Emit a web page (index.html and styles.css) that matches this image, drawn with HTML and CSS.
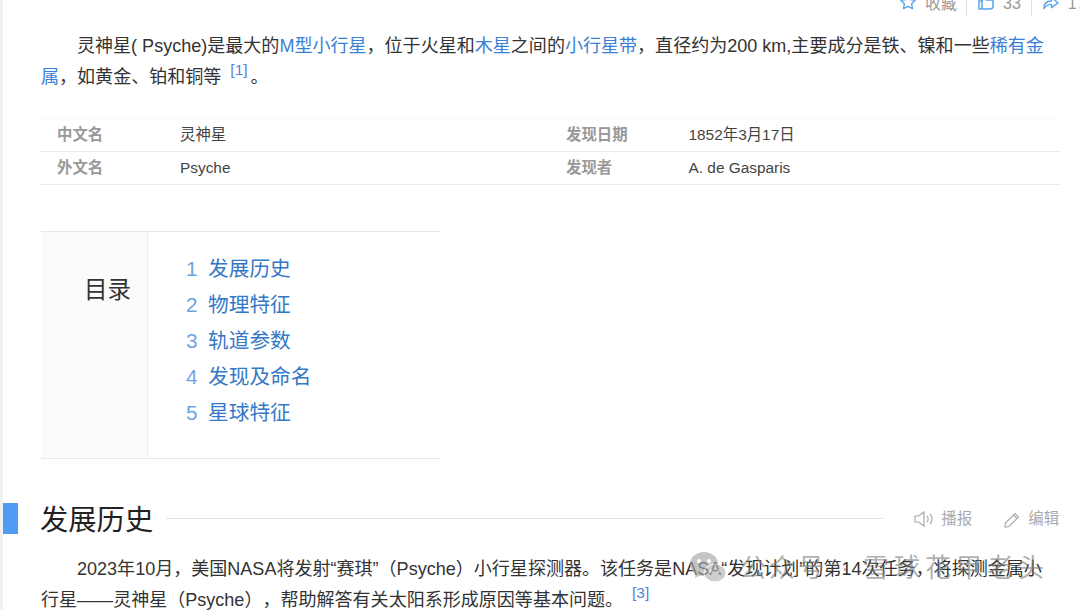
FILE: index.html
```html
<!DOCTYPE html>
<html lang="zh">
<head>
<meta charset="utf-8">
<title>灵神星</title>
<link rel="stylesheet" href="styles.css">
</head>
<body>
<div class="page">
  <div class="topbar">
    <span class="act act-fav"><svg class="ico" viewBox="0 0 16 16"><path d="M8 .8l2.200 4.700 5 .7-3.600 3.500.9 5L8 12.300l-4.500 2.400.9-5L.8 6.200l5-.7z" fill="none" stroke="#5ea3ee" stroke-width="1.400" stroke-linejoin="round"/></svg><span class="lbl">收藏</span></span>
    <span class="act act-like"><svg class="ico" viewBox="0 0 16 16"><path d="M1 7h3v8H1zM4 7l3-5c2 0 2 2 1.500 4h6.500v6c0 2-1 3-3 3H4" fill="none" stroke="#5ea3ee" stroke-width="1.500"/></svg><span class="lbl">33</span></span>
    <span class="act act-share"><svg class="ico" viewBox="0 0 17 16"><path d="M1 15c0-5 3-8 8-8V3l7 6-7 5v-3.500c-4 0-6 1-8 4.500z" fill="none" stroke="#5ea3ee" stroke-width="1.500" stroke-linejoin="round"/></svg><span class="lbl">17</span></span>
  </div>
  <p class="para intro">灵神星( Psyche)是最大的<a>M型小行星</a>，位于火星和<a>木星</a>之间的<a>小行星带</a>，直径约为200 km,主要成分是铁、镍和一些<a>稀有金属</a>，如黄金、铂和铜等<sup>[1]</sup>。</p>
  <div class="basic">
    <div class="row"><b>中文名</b><span class="val">灵神星</span><b>发现日期</b><span class="val">1852年3月17日</span></div>
    <div class="row"><b>外文名</b><span class="val">Psyche</span><b>发现者</b><span class="val">A. de Gasparis</span></div>
  </div>
  <div class="toc">
    <div class="toc-title">目录</div>
    <ol class="toc-list">
      <li><i>1</i><a>发展历史</a></li>
      <li><i>2</i><a>物理特征</a></li>
      <li><i>3</i><a>轨道参数</a></li>
      <li><i>4</i><a>发现及命名</a></li>
      <li><i>5</i><a>星球特征</a></li>
    </ol>
  </div>
  <div class="heading">
    <span class="mark"></span>
    <h2>发展历史</h2>
    <span class="rule"></span>
    <span class="tool tool-play"><svg class="tico" viewBox="0 0 20 18"><path d="M1 6h3.500L10 2v14l-5.500-4H1zM13 6c1.500 1.500 1.500 4.500 0 6M16 4c2.500 3 2.500 7 0 10" fill="none" stroke="#aaa" stroke-width="1.200"/></svg>播报</span>
    <span class="tool tool-edit"><svg class="tico2" viewBox="0 0 16 18"><path d="M1.500 13L11 3.500l3.500 3.500L5 16.500l-4 .5zM9.500 5l3.500 3.500" fill="none" stroke="#aaa" stroke-width="1.200"/></svg>编辑</span>
  </div>
  <p class="para second">2023年10月，美国NASA将发射“赛琪”（Psyche）小行星探测器。该任务是NASA“发现计划”的第14次任务，将探测金属小行星——灵神星（Psyche），帮助解答有关太阳系形成原因等基本问题。<sup>[3]</sup></p>
  <div class="watermark">
    <svg class="wm-ico" viewBox="0 0 36 31"><ellipse cx="14" cy="12" rx="14" ry="12" fill="#a6a6a6"/><path d="M6 20l-1 6 6-3z" fill="#a6a6a6"/><ellipse cx="25" cy="21" rx="11" ry="9" fill="#b4b4b4" stroke="#fff" stroke-width="1"/><circle cx="9" cy="9" r="2" fill="#fff"/><circle cx="19" cy="9" r="2" fill="#fff"/><circle cx="21" cy="19" r="1.500" fill="#fff"/><circle cx="29" cy="19" r="1.500" fill="#fff"/></svg>
    <span class="wm-a">公众号</span><span class="wm-dot">·</span><span class="wm-b">雪球花甲老头</span>
  </div>
</div>
</body>
</html>
```
FILE: styles.css
```css
* { box-sizing: border-box; }
html, body { margin: 0; padding: 0; }
body {
  width: 1080px;
  height: 610px;
  overflow: hidden;
  background: #fff;
  font-family: "Liberation Sans", "Noto Sans CJK SC", sans-serif;
  color: #333;
  text-spacing-trim: space-all;
}
.page {
  position: relative;
  height: 610px;
  border-left: 3px solid #f1f1f1;
  padding-left: 38px;
  display: flex;
  flex-direction: column;
}
.page > * { flex: none; }
.topbar {
  height: 16px;
  display: flex;
  padding-left: 859px;
  font-size: 16px;
  color: #999;
  margin-right: -38px;
}
.act { display: flex; align-items: flex-start; height: 16px; flex: none; }
.act-fav { gap: 9px; padding-right: 9px; }
.act-like { gap: 9px; padding: 0 10px 0 11px; border-left: 1px solid #ddd; }
.act-share { gap: 9px; padding-left: 11px; border-left: 1px solid #ddd; }
.ico { width: 16px; height: 16px; margin-top: -6px; flex: none; }
.lbl { line-height: 16px; margin-top: -4px; white-space: nowrap; }
.para { margin: 0; font-size: 18.05px; line-height: 31px; width: 1005px; text-indent: 36px; color: #333; }
.intro { margin-top: 15px; }
.para a { color: #3a80d6; }
sup { font-size: 15.500px; color: #5b7fd6; line-height: 0; vertical-align: 8px; margin: 0 3px 0 9px; }
.basic { margin-top: 25px; width: 1019px; border-top: 1px dotted #eee; }
.row {
  display: grid;
  grid-template-columns: 123px 386px 122.5px 1fr;
  height: 33px;
  align-items: center;
  padding-left: 16px;
  font-size: 15.4px;
  line-height: 20px;
  border-bottom: 1px dotted #d4d4d4;
}
.row b { color: #999; font-weight: 700; }
.val { color: #444; }
.toc {
  margin-top: 46px;
  width: 400px;
  height: 228px;
  display: flex;
  border-top: 1px solid #e8e8e8;
  border-bottom: 1px solid #e8e8e8;
}
.toc-title {
  width: 107px;
  background: #fbfbfb;
  border-right: 1px solid #eee;
  padding: 42px 16px 0 0;
  text-align: right;
  font-size: 23.500px;
  line-height: 32px;
  color: #333;
}
.toc-list { list-style: none; margin: 0; padding: 19px 0 0 38px; font-size: 20.700px; line-height: 36px; }
.toc-list li { display: flex; gap: 10px; }
.toc-list i { font-style: normal; color: #6ea4e4; width: 12px; }
.toc-list a { color: #3578c6; }
.heading { margin-top: 40px; display: flex; align-items: center; height: 39px; position: relative; }
.mark { position: absolute; left: -38px; top: 4px; width: 15px; height: 31px; background: #4f9cf2; }
h2 { margin: 0 0 0 -1px; font-size: 28.300px; font-weight: 400; color: #222; line-height: 36px; padding-top: 2px; white-space: nowrap; flex: none; }
.rule { flex: none; width: 717px; height: 1px; background: #e3e3e3; margin-left: 13px; }
.tool { display: flex; align-items: center; font-size: 15.500px; color: #aaa; white-space: nowrap; line-height: 20px; flex: none; }
.tool-play { gap: 7px; margin-left: 31px; }
.tool-edit { gap: 8px; margin-left: 32px; }
.tico { width: 20px; height: 18px; }
.tico2 { width: 16px; height: 18px; }
.second { margin-top: 16px; }
.watermark {
  position: absolute;
  left: 687px;
  top: 552px;
  display: flex;
  align-items: center;
  font-size: 26px;
  line-height: 32px;
  color: rgba(125,125,125,.62);
  white-space: nowrap;
}
.wm-ico { width: 36px; height: 31px; margin: -2px 14px 0 0; flex: none; opacity: .65; }
.wm-a { letter-spacing: 3px; }
.wm-dot { width: 36px; text-align: center; }
.wm-b { letter-spacing: 5px; }
```
